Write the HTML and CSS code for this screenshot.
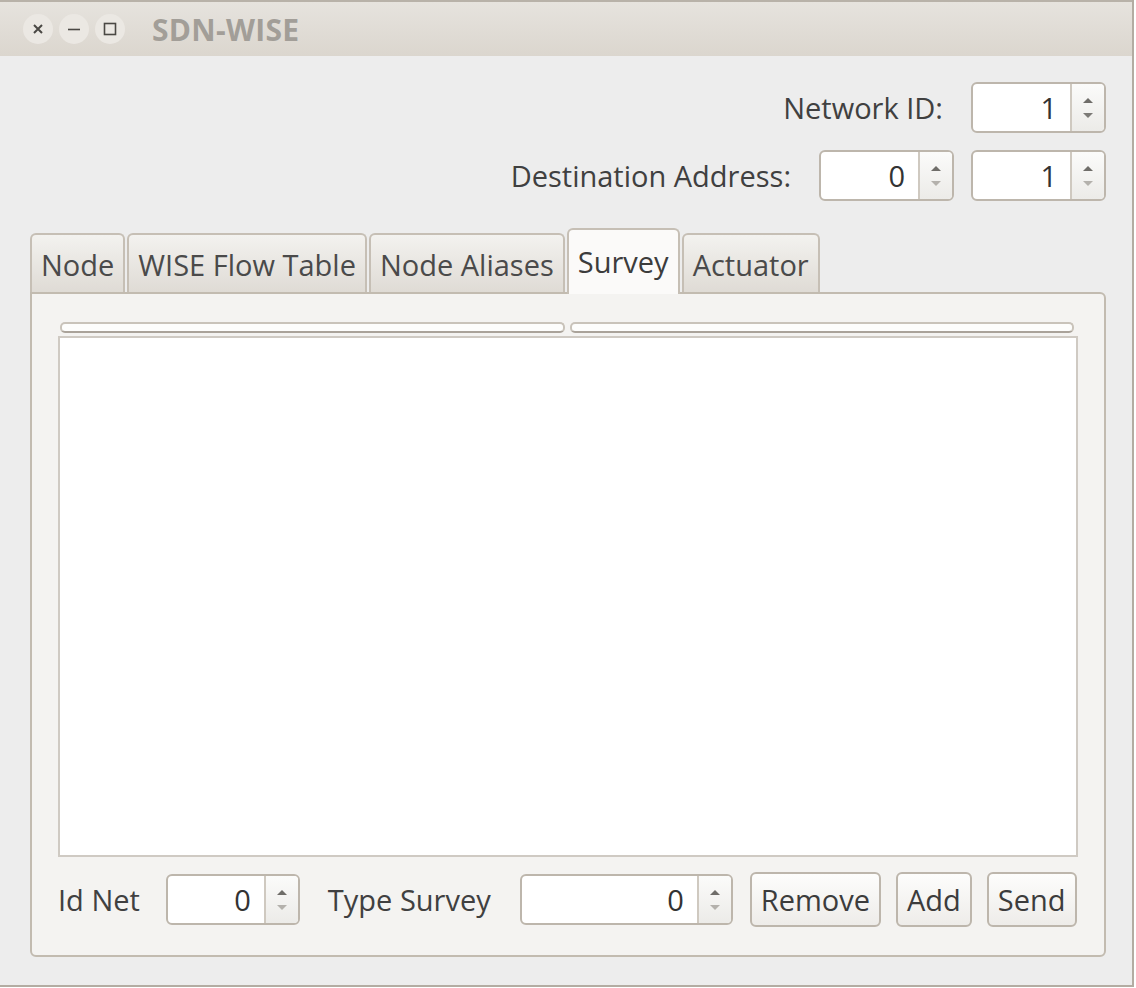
FILE: index.html
```html
<!DOCTYPE html>
<html>
<head>
<meta charset="utf-8">
<link rel="stylesheet" href="styles.css">
</head>
<body>
<div class="window">
  <div class="titlebar">
    <div class="wbtns">
      <span class="wbtn"><svg width="14" height="14" viewBox="0 0 14 14"><path d="M3 3 L11 11 M11 3 L3 11" stroke="#4a4844" stroke-width="2"/></svg></span>
      <span class="wbtn"><svg width="14" height="14" viewBox="0 0 14 14"><path d="M1 7.5 H13" stroke="#4a4844" stroke-width="1.6"/></svg></span>
      <span class="wbtn"><svg width="14" height="14" viewBox="0 0 14 14"><rect x="1.5" y="1.5" width="11" height="11" fill="none" stroke="#4a4844" stroke-width="1.6"/></svg></span>
    </div>
    <div class="title">SDN-WISE</div>
  </div>
  <div class="content">
    <div class="row">
      <span class="lbl">Network ID:</span>
      <div class="spin w135"><span class="val">1</span><span class="arrows"><i class="up"></i><i class="down dark"></i></span></div>
    </div>
    <div class="row row2">
      <span class="lbl">Destination Address:</span>
      <div class="spin w135"><span class="val">0</span><span class="arrows"><i class="up"></i><i class="down"></i></span></div>
      <div class="spin w135 gap17"><span class="val">1</span><span class="arrows"><i class="up"></i><i class="down"></i></span></div>
    </div>
    <div class="tabs">
      <div class="tab">Node</div>
      <div class="tab">WISE Flow Table</div>
      <div class="tab">Node Aliases</div>
      <div class="tab sel">Survey</div>
      <div class="tab">Actuator</div>
    </div>
    <div class="panel">
      <div class="thead"><span class="th"></span><span class="th"></span></div>
      <div class="tbody"></div>
      <div class="bottom">
        <span class="lbl">Id Net</span>
        <div class="spin w134"><span class="val">0</span><span class="arrows"><i class="up"></i><i class="down"></i></span></div>
        <span class="lbl type">Type Survey</span>
        <div class="spin w213"><span class="val">0</span><span class="arrows"><i class="up"></i><i class="down"></i></span></div>
        <button class="btn first">Remove</button>
        <button class="btn">Add</button>
        <button class="btn">Send</button>
      </div>
    </div>
  </div>
</div>
</body>
</html>
```

FILE: styles.css
```css
html, body {
  margin: 0;
  padding: 0;
  background: #ffffff;
}
body {
  font-family: "Open Sans", "DejaVu Sans", sans-serif;
  color: #404040;
}
.window {
  width: 1134px;
  height: 987px;
  box-sizing: border-box;
  border-right: 2px solid #b3aca2;
  border-bottom: 2px solid #b3aca2;
  background: #ededed;
  display: flex;
  flex-direction: column;
}
.titlebar {
  height: 56px;
  box-sizing: border-box;
  border-top: 2px solid #b8b2a9;
  background: linear-gradient(#e6e3de, #dbd6ce);
  display: flex;
  align-items: center;
  padding-left: 23px;
}
.wbtns {
  display: flex;
  gap: 6px;
}
.wbtn {
  width: 30px;
  height: 30px;
  border-radius: 50%;
  background: #ebe8e3;
  display: flex;
  align-items: center;
  justify-content: center;
}
.title {
  margin-left: 27px;
  font-weight: bold;
  font-size: 30px;
  color: #a29e98;
  letter-spacing: 0.3px;
}
.content {
  flex: 1;
  padding: 26px 26px 28px 30px;
  display: flex;
  flex-direction: column;
}
.row {
  display: flex;
  justify-content: flex-end;
  align-items: center;
  height: 51px;
}
.row2 {
  margin-top: 17px;
}
.lbl {
  font-size: 29px;
  margin-right: 28px;
  line-height: 1;
  flex-shrink: 0;
}
.spin {
  height: 51px;
  box-sizing: border-box;
  border: 2px solid #bdb6ac;
  border-radius: 6px;
  background: #ffffff;
  display: flex;
  overflow: hidden;
  flex-shrink: 0;
}
.w135 { width: 135px; }
.w134 { width: 134px; }
.w213 { width: 213px; }
.gap17 { margin-left: 17px; }
.val {
  flex: 1;
  text-align: right;
  padding-right: 13px;
  font-size: 29px;
  line-height: 47px;
  color: #333333;
}
.arrows {
  width: 32px;
  border-left: 2px solid #cfc9c0;
  background: linear-gradient(#fbfbfa, #ecebe8);
  display: flex;
  flex-direction: column;
  align-items: center;
  justify-content: center;
  gap: 10px;
}
.arrows i {
  width: 0;
  height: 0;
  border-left: 5px solid transparent;
  border-right: 5px solid transparent;
}
.arrows .up {
  border-bottom: 5px solid #6f6d69;
}
.arrows .down {
  border-top: 5px solid #b4b1ac;
}
.arrows .down.dark {
  border-top-color: #7c7a76;
}
.tabs {
  margin-top: 27px;
  height: 64px;
  display: flex;
  align-items: flex-end;
  gap: 2px;
}
.tab {
  height: 59px;
  box-sizing: border-box;
  border: 2px solid #c6bfb5;
  border-bottom: none;
  border-radius: 6px 6px 0 0;
  background: linear-gradient(#f3f2ef, #dfdbd5);
  font-size: 29px;
  line-height: 60px;
  padding: 0 9px;
  color: #4a4a4a;
}
.tab.sel {
  height: 66px;
  margin-bottom: -2px;
  position: relative;
  z-index: 1;
  background: #fbfaf9;
  color: #3c3c3c;
  line-height: 64px;
}
.panel {
  flex: 1;
  box-sizing: border-box;
  border: 2px solid #c2bbb0;
  border-radius: 0 6px 6px 6px;
  background: #f4f3f1;
  padding: 28px 26px 28px 26px;
  display: flex;
  flex-direction: column;
}
.thead {
  display: flex;
  gap: 5px;
  padding: 0 4px 0 2px;
  height: 14px;
  box-sizing: border-box;
  padding-bottom: 3px;
}
.th {
  flex: 1;
  height: 11px;
  box-sizing: border-box;
  border: 2px solid #c9c3ba;
  border-bottom-color: #aaa39a;
  border-radius: 5px;
  background: #fdfdfc;
}
.tbody {
  flex: 1;
  background: #ffffff;
  border: 2px solid #cfcac3;
}
.bottom {
  margin-top: 15px;
  height: 55px;
  display: flex;
  align-items: center;
}
.bottom .lbl {
  margin-right: 26px;
}
.bottom .type {
  margin-left: 28px;
  margin-right: 29px;
}
.btn {
  flex-shrink: 0;
  height: 55px;
  box-sizing: border-box;
  border: 2px solid #bdb6ac;
  border-radius: 6px;
  background: linear-gradient(#fdfdfc, #eeece9);
  font-family: "Open Sans", "DejaVu Sans", sans-serif;
  font-size: 29px;
  color: #3c3c3c;
  padding: 0 9px;
  margin-left: 15px;
}
.btn.first {
  margin-left: 17px;
}
```
